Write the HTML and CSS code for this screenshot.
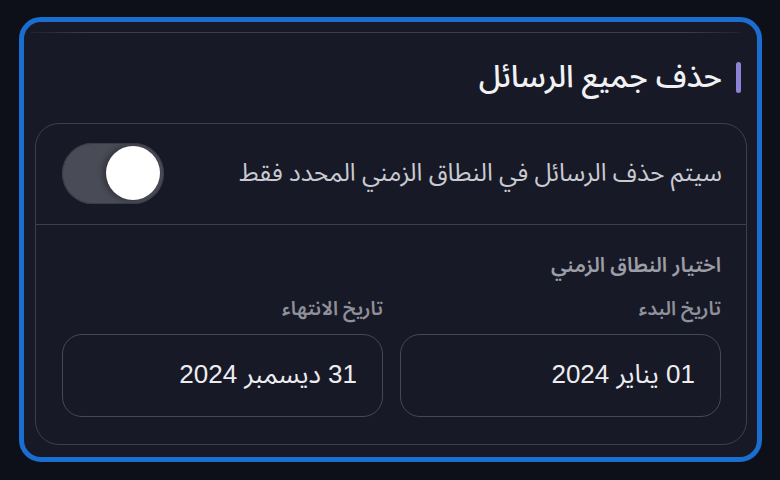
FILE: index.html
```html
<!DOCTYPE html>
<html lang="ar" dir="rtl">
<head>
<meta charset="utf-8">
<link rel="stylesheet" href="styles.css">
</head>
<body>
<div class="frame">
  <div class="topline"></div>
  <h2 class="title"><span class="bar"></span>حذف جميع الرسائل</h2>
  <div class="card">
    <div class="row">
      <span class="row-text">سيتم حذف الرسائل في النطاق الزمني المحدد فقط</span>
      <span class="toggle"><span class="knob"></span></span>
    </div>
    <div class="range">
      <div class="range-title">اختيار النطاق الزمني</div>
      <div class="fields">
        <div class="field">
          <div class="label">تاريخ البدء</div>
          <div class="input">01 يناير 2024</div>
        </div>
        <div class="field">
          <div class="label">تاريخ الانتهاء</div>
          <div class="input">31 ديسمبر 2024</div>
        </div>
      </div>
    </div>
  </div>
</div>
</body>
</html>
```
FILE: styles.css
```css
html, body {
  margin: 0;
  padding: 0;
  background: #0e1019;
  width: 780px;
  height: 480px;
  overflow: hidden;
}
body {
  font-family: "Noto Sans Arabic", "DejaVu Sans", "Noto Sans", sans-serif;
  padding-top: 17px;
  padding-right: 18px;
  box-sizing: border-box;
}
.frame {
  width: 743px;
  height: 445px;
  box-sizing: border-box;
  border: 5px solid #1a6ed0;
  border-radius: 22px;
  background: #171a26;
  margin-left: 19px;
  padding: 10px 10px 0 11px;
}
.topline {
  height: 1px;
  margin: 0 6px 0 -4px;
  background: linear-gradient(to left, rgba(70,72,84,0.2), #3c3e4a 8%, #3c3e4a 92%, rgba(70,72,84,0.2));
}
.title {
  margin: 0;
  height: 90px;
  display: flex;
  align-items: center;
  gap: 14px;
  font-size: 31px;
  font-weight: 500;
  color: #f1f1f4;
  padding-right: 6px;
  box-sizing: border-box;
  padding-bottom: 2px;
  line-height: 1;
}
.bar {
  width: 5px;
  height: 31px;
  border-radius: 3px;
  background: #8c82d6;
}
.card {
  border: 1px solid #3d3f4b;
  border-radius: 24px;
  height: 322px;
  box-sizing: border-box;
}
.row {
  height: 101px;
  border-bottom: 1px solid #3d3f4b;
  display: flex;
  align-items: center;
  justify-content: space-between;
  padding: 0 24px 2px 26px;
  box-sizing: border-box;
}
.row-text {
  font-size: 24.5px;
  color: #c9cad1;
  line-height: 1;
}
.toggle {
  direction: ltr;
  width: 102px;
  height: 61px;
  border-radius: 31px;
  background: #494b56;
  box-shadow: inset 0 0 0 1px #3a3c47;
  display: flex;
  align-items: center;
  justify-content: flex-end;
  padding: 0 4px;
  box-sizing: border-box;
}
.knob {
  width: 54px;
  height: 54px;
  border-radius: 50%;
  background: #ffffff;
  box-shadow: -3px 0 6px rgba(0,0,0,0.35);
}
.range {
  padding: 26px 25px 0 26px;
}
.range-title {
  font-size: 20.5px;
  font-weight: 600;
  color: #9c9da6;
  line-height: 30px;
}
.fields {
  display: grid;
  grid-template-columns: 1fr 1fr;
  gap: 17px;
  margin-top: 14px;
}
.label {
  font-size: 19.5px;
  font-weight: 600;
  color: #8f909a;
  line-height: 28px;
  margin-bottom: 11px;
}
.input {
  height: 83px;
  box-sizing: border-box;
  border: 1px solid #464853;
  border-radius: 20px;
  display: flex;
  align-items: center;
  padding: 0 25px 2px;
  font-size: 26px;
  color: #ededf1;
  font-family: "Liberation Sans", "Noto Sans Arabic", "DejaVu Sans", sans-serif;
}
```
